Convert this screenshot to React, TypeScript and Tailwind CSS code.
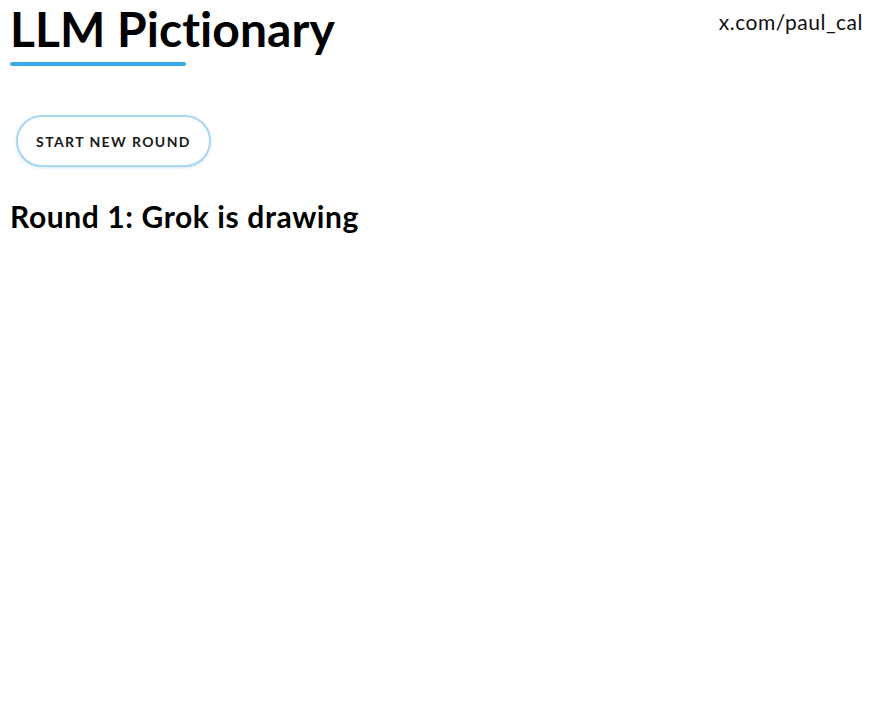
import React from 'react';

export default function App() {
  return (
    <div className="min-h-screen bg-white text-black" style={{ fontFamily: 'Lato, "Noto Sans", sans-serif' }}>
      <header className="flex items-start justify-between pl-[10px] pr-[15px]">
        <div className="flex flex-col">
          <h1 className="text-[48px] font-bold leading-[58px] tracking-[0.05px] [font-variant-ligatures:none]">LLM Pictionary</h1>
          <div className="mt-[4px] h-[4px] w-[176px] rounded-full bg-[#3ba9e6]" />
        </div>
        <a className="mt-[8px] text-[21px] leading-[28px] tracking-[0.5px] text-[#111]">x.com/paul_cal</a>
      </header>

      <div className="mt-[49px] pl-[16px]">
        <button className="h-[52px] w-[195px] rounded-full border-2 border-[#a9d7ee] bg-white text-[14px] font-bold tracking-[1.4px] text-[#1a1a1a] shadow-[0_1px_3px_rgba(59,169,230,0.25)]">
          START NEW ROUND
        </button>
      </div>

      <h2 className="mt-[30px] pl-[10px] text-[30px] font-bold leading-[38px] tracking-[0.6px]">Round 1: Grok is drawing</h2>
    </div>
  );
}
